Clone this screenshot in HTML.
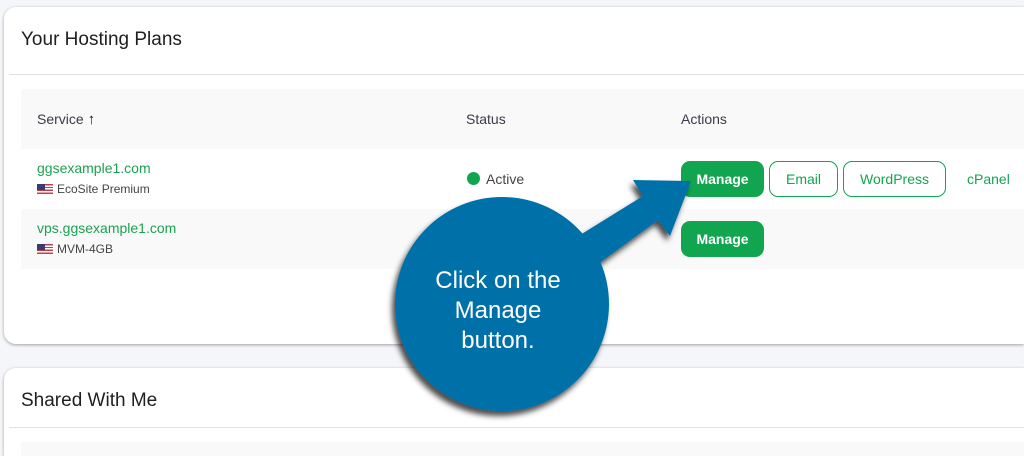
<!DOCTYPE html>
<html style="width:1024px;height:456px;overflow:hidden"><head><style>
*{margin:0;padding:0;box-sizing:border-box}
body{width:1024px;height:456px;overflow:hidden;background:#f5f6f9;font-family:"Liberation Sans",sans-serif;position:relative;color:#333}
.card{position:absolute;left:4px;width:1020px;background:#fff;border-radius:12px 0 0 12px;box-shadow:0 1px 3px rgba(0,0,0,.35)}
.title{position:absolute;left:17px;font-size:19px;color:#1f1f1f}
.hr{position:absolute;left:5px;right:0;height:1px;background:#e2e2e2}
.abs{position:absolute}
.g{color:#1aa34f}
.btn{position:absolute;height:36px;border-radius:9px;font-size:14px;display:flex;align-items:center;justify-content:center}
.fill{background:#12a550;color:#fff;font-weight:bold}
.out{border:1px solid #12a550;color:#12a550;background:#fff}
.flag{display:inline-block;width:16px;height:10px;vertical-align:-1px;margin-right:4px;background:repeating-linear-gradient(#c0404a 0 1.4px,#fff 1.4px 2.8px);position:relative}
.flag:before{content:"";position:absolute;left:0;top:0;width:8px;height:6px;background:#3c3b6e}
</style></head><body>
<div class="card" style="top:7px;height:337px">
  <div class="title" style="top:22px">Your Hosting Plans</div>
  <div class="hr" style="top:67px"></div>
  <div class="abs" style="left:17px;top:82px;right:0;height:60px;background:#f9f9f9"></div>
  <div class="abs" style="left:17px;top:202px;right:0;height:60px;background:#f9f9f9"></div>
</div>
<div class="abs" style="left:37px;top:111px;font-size:14px;color:#3a3a4a">Service <span style="font-size:15px;color:#111">&#8593;</span></div>
<div class="abs" style="left:466px;top:111px;font-size:14px;color:#3a3a4a">Status</div>
<div class="abs" style="left:681px;top:111px;font-size:14px;color:#3a3a4a">Actions</div>
<div class="abs g" style="left:37px;top:160px;font-size:14px">ggsexample1.com</div>
<div class="abs" style="left:37px;top:182px;font-size:12px;color:#444"><span class="flag"></span>EcoSite Premium</div>
<div class="abs g" style="left:37px;top:220px;font-size:14px">vps.ggsexample1.com</div>
<div class="abs" style="left:37px;top:242px;font-size:12px;color:#444"><span class="flag"></span>MVM-4GB</div>
<div class="abs" style="left:467px;top:172px;width:13px;height:13px;border-radius:50%;background:#12a550"></div>
<div class="abs" style="left:486px;top:171px;font-size:14px;color:#444">Active</div>
<div class="btn fill" style="left:681px;top:161px;width:83px">Manage</div>
<div class="btn out" style="left:769px;top:161px;width:69px">Email</div>
<div class="btn out" style="left:843px;top:161px;width:103px">WordPress</div>
<div class="abs" style="left:967px;top:171px;font-size:14px;color:#12a550">cPanel</div>
<div class="btn fill" style="left:681px;top:221px;width:83px">Manage</div>
<div class="card" style="top:368px;height:88px;overflow:hidden;border-radius:12px 0 0 0">
  <div class="title" style="top:22px">Shared With Me</div>
  <div class="hr" style="top:59px"></div>
  <div class="abs" style="left:17px;top:74px;right:0;height:14px;background:#f9f9f9"></div>
</div>
<svg class="abs" style="left:0;top:0" width="1024" height="456">
  <defs><filter id="s" x="-30%" y="-30%" width="160%" height="160%"><feDropShadow dx="-3" dy="5" stdDeviation="3" flood-color="#000" flood-opacity=".7"/></filter></defs>
  <g filter="url(#s)" fill="#0270a8">
    <polygon points="572,240 643,196 633,180 691,181 670,236 658,220 598,264"/>
    <circle cx="502" cy="304" r="107"/>
  </g>
  <g fill="#fff" font-family="Liberation Sans,sans-serif" font-size="24" text-anchor="middle">
    <text x="498" y="288">Click on the</text>
    <text x="498" y="318">Manage</text>
    <text x="498" y="348">button.</text>
  </g>
</svg>
</body></html>
